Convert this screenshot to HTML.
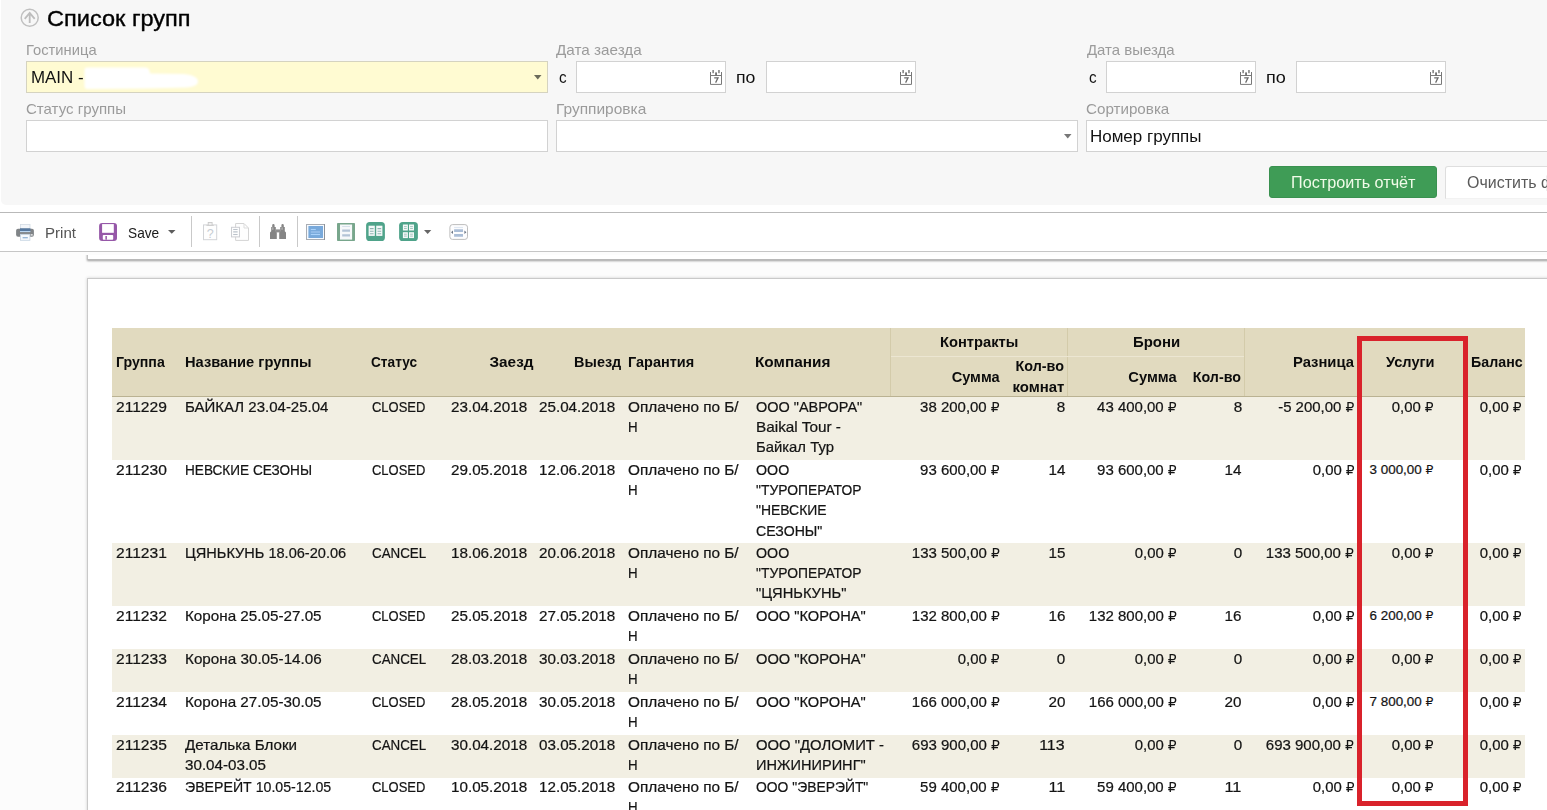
<!DOCTYPE html>
<html lang="ru"><head><meta charset="utf-8"><title>Список групп</title>
<style>

html,body{margin:0;padding:0;}
body{width:1547px;height:810px;overflow:hidden;background:#fff;position:relative;font-family:"Liberation Sans","DejaVu Sans",sans-serif;}
.t{position:absolute;white-space:nowrap;display:block;}
.d{-webkit-text-stroke:0.22px #141414;}
.t i.r{font-style:normal;font-family:"DejaVu Sans",sans-serif;font-size:0.93em;-webkit-text-stroke:0;}
.a{position:absolute;box-sizing:border-box;}
.inp{background:#fff;border:1px solid #d2d2d2;}
.sep{width:1px;background:#c9c9c9;top:216px;height:31px;}
svg{position:absolute;overflow:visible;}

</style></head><body>
<section id="filter" aria-label="Список групп">
<div class="a " style="left:1px;top:0px;width:1546px;height:204.5px;background:#f7f7f7;border-radius:0 0 0 5px;"></div>
<svg style="left:20px;top:8px" width="20" height="20" viewBox="0 0 20 20"><circle cx="9.7" cy="9.7" r="8.5" fill="none" stroke="#c0c0c0" stroke-width="1.5"/><path d="M9.7 15.1V5.6M4.7 10.9L9.7 4.9L14.7 10.9" fill="none" stroke="#bdbdbd" stroke-width="1.8"/></svg>
<div class="a inp" style="left:26px;top:61px;width:522px;height:32px;background:#fffbd2;border-color:#d5d3c0;"></div>
<div class="a inp" style="left:576px;top:61px;width:150px;height:32px;"></div>
<div class="a inp" style="left:766px;top:61px;width:150px;height:32px;"></div>
<div class="a inp" style="left:1106px;top:61px;width:150px;height:32px;"></div>
<div class="a inp" style="left:1296px;top:61px;width:150px;height:32px;"></div>
<div class="a inp" style="left:26px;top:120px;width:522px;height:32px;"></div>
<div class="a inp" style="left:556px;top:120px;width:522px;height:32px;"></div>
<div class="a inp" style="left:1086px;top:120px;width:522px;height:32px;"></div>
<svg style="left:84px;top:66px;filter:blur(0.9px)" width="116" height="26" viewBox="0 0 116 26"><path d="M0.5 4 Q0.5 1.6 3 1.6 L61 1.4 Q65 1.4 65.5 5 L66 7.6 L100 8 Q114 9.5 114 15.5 Q114 20.5 103 21.6 L60 22.6 L3 23 Q0.5 23 0.5 20 Z" fill="#fff"/></svg>
<svg style="left:534.25px;top:75.100px" width="7.5" height="4.6" viewBox="0 0 7.5 4.6"><path d="M0 0H7.5L3.75 4.6Z" fill="#6b6b5a"/></svg>
<svg style="left:1064.25px;top:134.1px" width="7.5" height="4.6" viewBox="0 0 7.5 4.6"><path d="M0 0H7.5L3.75 4.6Z" fill="#777"/></svg>
<svg style="left:710px;top:70px" width="12" height="15" viewBox="0 0 12 15"><path d="M0.5 2V14.4H11.5V2" fill="none" stroke="#787878" stroke-width="1"/><rect x="0.5" y="5" width="11" height="1" fill="#7a7a7a"/><rect x="2.3" y="0" width="1.7" height="3.2" fill="#8c8c8c"/><rect x="8.1" y="0" width="1.7" height="3.2" fill="#8c8c8c"/><rect x="5.2" y="2.4" width="1.7" height="3" fill="#666"/><path d="M4.2 7.9H8L5.6 12.6" fill="none" stroke="#6a6a6a" stroke-width="1.25"/></svg>
<svg style="left:900px;top:70px" width="12" height="15" viewBox="0 0 12 15"><path d="M0.5 2V14.4H11.5V2" fill="none" stroke="#787878" stroke-width="1"/><rect x="0.5" y="5" width="11" height="1" fill="#7a7a7a"/><rect x="2.3" y="0" width="1.7" height="3.2" fill="#8c8c8c"/><rect x="8.1" y="0" width="1.7" height="3.2" fill="#8c8c8c"/><rect x="5.2" y="2.4" width="1.7" height="3" fill="#666"/><path d="M4.2 7.9H8L5.6 12.6" fill="none" stroke="#6a6a6a" stroke-width="1.25"/></svg>
<svg style="left:1240px;top:70px" width="12" height="15" viewBox="0 0 12 15"><path d="M0.5 2V14.4H11.5V2" fill="none" stroke="#787878" stroke-width="1"/><rect x="0.5" y="5" width="11" height="1" fill="#7a7a7a"/><rect x="2.3" y="0" width="1.7" height="3.2" fill="#8c8c8c"/><rect x="8.1" y="0" width="1.7" height="3.2" fill="#8c8c8c"/><rect x="5.2" y="2.4" width="1.7" height="3" fill="#666"/><path d="M4.2 7.9H8L5.6 12.6" fill="none" stroke="#6a6a6a" stroke-width="1.25"/></svg>
<svg style="left:1430px;top:70px" width="12" height="15" viewBox="0 0 12 15"><path d="M0.5 2V14.4H11.5V2" fill="none" stroke="#787878" stroke-width="1"/><rect x="0.5" y="5" width="11" height="1" fill="#7a7a7a"/><rect x="2.3" y="0" width="1.7" height="3.2" fill="#8c8c8c"/><rect x="8.1" y="0" width="1.7" height="3.2" fill="#8c8c8c"/><rect x="5.2" y="2.4" width="1.7" height="3" fill="#666"/><path d="M4.2 7.9H8L5.6 12.6" fill="none" stroke="#6a6a6a" stroke-width="1.25"/></svg>
<div class="a " style="left:1269px;top:166px;width:168px;height:32px;background:#3f9c56;border:1px solid #3a9150;border-radius:3px;"></div>
<div class="a " style="left:1445px;top:166px;width:155px;height:33px;background:#fff;border:1px solid #dedede;border-bottom-color:#f2f2f2;border-radius:3px 0 0 0;"></div>

<span class="t" style="top:8.35px;font-size:21.2px;line-height:21.2px;left:47.30px;transform-origin:0 0;transform:scaleX(1.1114);"><b style="font-weight:400;-webkit-text-stroke:0.35px #000">Список групп</b></span>
<span class="t" style="top:42.53px;font-size:14.5px;line-height:14.5px;color:#9b9b9b;left:25.90px;transform-origin:0 0;transform:scaleX(1.0170);">Гостиница</span>
<span class="t" style="top:42.53px;font-size:14.5px;line-height:14.5px;color:#9b9b9b;left:556.20px;transform-origin:0 0;transform:scaleX(1.0521);">Дата заезда</span>
<span class="t" style="top:42.53px;font-size:14.5px;line-height:14.5px;color:#9b9b9b;left:1086.70px;transform-origin:0 0;transform:scaleX(1.0309);">Дата выезда</span>
<span class="t" style="top:101.53px;font-size:14.5px;line-height:14.5px;color:#9b9b9b;left:25.50px;transform-origin:0 0;transform:scaleX(1.0369);">Статус группы</span>
<span class="t" style="top:101.53px;font-size:14.5px;line-height:14.5px;color:#9b9b9b;left:555.80px;transform-origin:0 0;transform:scaleX(1.0678);">Группировка</span>
<span class="t" style="top:101.53px;font-size:14.5px;line-height:14.5px;color:#9b9b9b;left:1085.70px;transform-origin:0 0;transform:scaleX(1.0466);">Сортировка</span>
<span class="t" style="top:70.46px;font-size:16px;line-height:16px;color:#111;left:30.90px;transform-origin:0 0;transform:scaleX(1.0566);">MAIN -</span>
<span class="t" style="top:69.96px;font-size:16px;line-height:16px;color:#111;left:558.60px;transform-origin:0 0;transform:scaleX(0.9500);">с</span>
<span class="t" style="top:69.96px;font-size:16px;line-height:16px;color:#111;left:736.20px;transform-origin:0 0;transform:scaleX(1.1046);">по</span>
<span class="t" style="top:69.96px;font-size:16px;line-height:16px;color:#111;left:1089.00px;transform-origin:0 0;transform:scaleX(0.9500);">с</span>
<span class="t" style="top:69.96px;font-size:16px;line-height:16px;color:#111;left:1265.80px;transform-origin:0 0;transform:scaleX(1.1274);">по</span>
<span class="t" style="top:129.36px;font-size:16px;line-height:16px;color:#111;left:1090.30px;transform-origin:0 0;transform:scaleX(1.0611);">Номер группы</span>
<span class="t" style="top:174.26px;font-size:17.3px;line-height:17.3px;color:#f0fbe8;left:1290.90px;transform-origin:0 0;transform:scaleX(0.9371);">Построить отчёт</span>
<span class="t" style="top:174.26px;font-size:17.3px;line-height:17.3px;color:#5a5a5a;left:1466.70px;transform-origin:0 0;transform:scaleX(0.9241);">Очистить ф</span>
</section>
<div id="toolbar" role="toolbar">

<div class="a " style="left:0px;top:212px;width:1547px;height:40px;background:#fff;border-top:1px solid #b9b9b9;border-bottom:1px solid #c6c6c6;"></div>
<div class="a " style="left:0px;top:252px;width:1547px;height:558px;background:#fcfcfc;"></div>
<div class="a sep" style="left:191px"></div>
<div class="a sep" style="left:259px"></div>
<div class="a sep" style="left:297px"></div>
<svg style="left:16px;top:223.5px" width="18" height="17" viewBox="0 0 18 17"><rect x="4.4" y="0.5" width="9.6" height="5" fill="#f3f6fa" stroke="#d3dbe4" stroke-width="0.8"/><rect x="0.1" y="4.8" width="17.8" height="7.9" rx="1.9" fill="#808487"/><rect x="4" y="4.3" width="10.4" height="2.7" fill="#56789f"/><rect x="4" y="7" width="10.4" height="1.1" fill="#b9d5f1"/><rect x="4.4" y="10.3" width="9.5" height="6" fill="#f5f9fd" stroke="#c5d3e2" stroke-width="0.8"/><rect x="6.6" y="13.2" width="5.2" height="1.1" fill="#7fa6cf"/><rect x="14.8" y="10.3" width="1.9" height="1.2" fill="#fff"/></svg>
<svg style="left:99px;top:223px" width="18" height="18" viewBox="0 0 18 18"><rect x="0.1" y="0.1" width="17.9" height="17.8" rx="3" fill="#9658a8"/><rect x="3.1" y="1.1" width="11.7" height="8.7" fill="#fff"/><rect x="3.8" y="11.9" width="10.4" height="4.8" rx="0.8" fill="#fff"/><rect x="6.4" y="13" width="1.5" height="3.7" fill="#9658a8"/></svg>
<svg style="left:167.95px;top:229.799px" width="7.5" height="3.8" viewBox="0 0 7.5 3.8"><path d="M0 0H7.5L3.75 3.8Z" fill="#5c5c5c"/></svg>
<svg style="left:203px;top:222px" width="14" height="18" viewBox="0 0 14 18"><rect x="0.5" y="2.9" width="13.2" height="14.8" fill="#fefefe" stroke="#d2d4d7"/><rect x="5.2" y="0.5" width="3.9" height="2.9" fill="#f1f1f1" stroke="#c9c9c9" stroke-width="0.9"/><rect x="3.4" y="2.9" width="7.4" height="1" fill="#cfcfcf"/><text x="7.2" y="15.6" font-size="12.5" text-anchor="middle" fill="#c6ccd3" font-family="Liberation Sans,sans-serif">?</text></svg>
<svg style="left:231px;top:223px" width="18" height="18" viewBox="0 0 18 18"><path d="M4.6 0.5H13L17.5 5V17.4H4.6Z" fill="#fefefe" stroke="#d4d4d4"/><path d="M13 0.8V5H17.2" fill="none" stroke="#dcdcdc"/><rect x="0.5" y="4.3" width="8" height="9.6" fill="#fdfdfd" stroke="#ccced2"/><path d="M2.2 6.5H6.6M2.2 8.9H6.6M2.2 11.5H6.6" stroke="#bcc3cb" stroke-width="1.1"/></svg>
<svg style="left:270px;top:224px" width="16" height="15" viewBox="0 0 16 15"><path d="M2.2 3V1.2Q2.2 0 3.4 0Q4.6 0 4.6 1.2V3H5.8V7.2L6.8 8.4V15H0V8.4L1.2 7.2V3Z" fill="#858585"/><path d="M11.4 3V1.2Q11.4 0 12.6 0Q13.8 0 13.8 1.2V3H14.8V7.2L16 8.4V15H9.2V8.4L10.2 7.2V3Z" fill="#858585"/><rect x="5.6" y="5.4" width="4.8" height="3" fill="#8f8f8f"/><rect x="2.4" y="3.4" width="0.9" height="2.4" fill="#c9c9c9"/><rect x="11.6" y="3.4" width="0.9" height="2.4" fill="#c9c9c9"/></svg>
<svg style="left:306px;top:224px" width="19" height="16" viewBox="0 0 19 16"><rect x="0.5" y="0.5" width="18" height="15" fill="#f4f9ff" stroke="#a9adb3"/><rect x="18" y="0" width="1" height="16" fill="#8d9299"/><rect x="2.4" y="2" width="14.6" height="12" fill="#78a9db"/><path d="M4.8 5.5H9.8" stroke="#a9d2fb" stroke-width="1.1"/><path d="M4.8 8H14" stroke="#9cc3ee" stroke-width="1.4"/><path d="M4.8 10.5H14" stroke="#a9d2fb" stroke-width="1.1"/></svg>
<svg style="left:337px;top:223px" width="18" height="18" viewBox="0 0 18 18"><rect x="0" y="0" width="18" height="18" rx="0.8" fill="#78a68c"/><rect x="3" y="1.5" width="12.1" height="15.1" fill="#f6f8fa"/><path d="M5.2 3.5H13" stroke="#d3dde8" stroke-width="0.9"/><path d="M5.2 7.7H13M5.2 12.4H13" stroke="#b3c3d6" stroke-width="2.2"/></svg>
<svg style="left:366px;top:222px" width="19" height="19" viewBox="0 0 19 19"><rect x="0.1" y="0" width="18.8" height="19" rx="3.6" fill="#4fa38a"/><rect x="2.6" y="3.7" width="6.2" height="10.2" fill="#f4f8f8"/><rect x="10.2" y="3.7" width="6.2" height="10.2" fill="#f4f8f8"/><path d="M3.9 6.6H7.6M3.9 9.3H7.6M3.9 11.7H7.6M11.5 6.6H15.2M11.5 9.3H15.2M11.5 11.7H15.2" stroke="#8fb3b0" stroke-width="1.1"/></svg>
<svg style="left:399px;top:222px" width="19" height="19" viewBox="0 0 19 19"><rect x="0.1" y="0" width="18.8" height="19" rx="3.6" fill="#4fa38a"/><rect x="3.9" y="2.5" width="5" height="6" fill="#f4f8f8"/><rect x="10" y="2.5" width="5" height="6" fill="#f4f8f8"/><rect x="3.9" y="10.2" width="5" height="5.9" fill="#f4f8f8"/><rect x="10" y="10.2" width="5" height="5.9" fill="#f4f8f8"/><path d="M5 4.6H7.8M5 6.5H7.8M11.1 4.6H13.9M11.1 6.5H13.9M5 12.2H7.8M5 14.1H7.8M11.1 12.2H13.9M11.1 14.1H13.9" stroke="#9cc0b8" stroke-width="0.9"/></svg>
<svg style="left:424.150px;top:229.9px" width="7.3" height="4" viewBox="0 0 7.3 4"><path d="M0 0H7.3L3.65 4Z" fill="#666"/></svg>
<svg style="left:449px;top:224px" width="19" height="16" viewBox="0 0 19 16"><rect x="0.9" y="0.6" width="17.6" height="14.8" rx="2.6" fill="#fdfdfe" stroke="#bdbdbd"/><path d="M5.1 3.5H14" stroke="#dfe7f1" stroke-width="1.2"/><path d="M5.1 6.65H14M5.1 11.3H14" stroke="#aabdd6" stroke-width="2.7"/><path d="M2 8.3L4 6.6V10Z M17.4 8.3L15.4 6.6V10Z" fill="#6b7685"/></svg>

<span class="t" style="top:226.33px;font-size:14.5px;line-height:14.5px;color:#555;left:45.20px;transform-origin:0 0;transform:scaleX(1.0393);">Print</span>
<span class="t" style="top:226.33px;font-size:14.5px;line-height:14.5px;color:#1a1a1a;left:127.70px;transform-origin:0 0;transform:scaleX(0.9437);">Save</span>
</div>
<main id="report" role="table">

<div class="a " style="left:87px;top:240px;width:1513px;height:20px;background:#fff;border:1px solid #c2c2c2;border-bottom-color:#b9b9b9;box-shadow:0 1px 2px rgba(0,0,0,.38);clip-path:inset(15px -10px -10px -10px);"></div>
<div class="a " style="left:87px;top:278px;width:1513px;height:622px;background:#fff;border:1px solid #c9c9c9;box-shadow:0 0 3px rgba(0,0,0,.18);"></div>
<div class="a " style="left:112px;top:328px;width:1413px;height:69px;background:#e1dabf;border-bottom:1px solid #bab292;"></div>
<div class="a " style="left:112px;top:397px;width:1413px;height:63px;background:#f2efe3;"></div>
<div class="a " style="left:112px;top:543px;width:1413px;height:63px;background:#f2efe3;"></div>
<div class="a " style="left:112px;top:649px;width:1413px;height:43px;background:#f2efe3;"></div>
<div class="a " style="left:112px;top:735px;width:1413px;height:43px;background:#f2efe3;"></div>
<div class="a " style="left:890px;top:328px;width:1px;height:68px;background:#d3cbaa;"></div>
<div class="a " style="left:1067px;top:328px;width:1px;height:68px;background:#d3cbaa;"></div>
<div class="a " style="left:1244px;top:328px;width:1px;height:68px;background:#d3cbaa;"></div>
<div class="a " style="left:891px;top:356px;width:353px;height:1px;background:#ece6d2;"></div>
<div class="thead" role="row">
<span class="t" style="top:354.74px;font-size:14.8px;line-height:14.8px;font-weight:700;color:#0c0c0c;left:115.80px;transform-origin:0 0;transform:scaleX(0.9566);">Группа</span>
<span class="t" style="top:354.74px;font-size:14.8px;line-height:14.8px;font-weight:700;color:#0c0c0c;left:184.50px;transform-origin:0 0;transform:scaleX(0.9914);">Название группы</span>
<span class="t" style="top:354.74px;font-size:14.8px;line-height:14.8px;font-weight:700;color:#0c0c0c;left:371.20px;transform-origin:0 0;transform:scaleX(0.9223);">Статус</span>
<span class="t" style="top:354.74px;font-size:14.8px;line-height:14.8px;font-weight:700;color:#0c0c0c;right:1013.80px;transform-origin:100% 0;transform:scaleX(1.0357);">Заезд</span>
<span class="t" style="top:354.74px;font-size:14.8px;line-height:14.8px;font-weight:700;color:#0c0c0c;right:925.40px;transform-origin:100% 0;transform:scaleX(0.9770);">Выезд</span>
<span class="t" style="top:354.74px;font-size:14.8px;line-height:14.8px;font-weight:700;color:#0c0c0c;left:627.60px;transform-origin:0 0;transform:scaleX(0.9792);">Гарантия</span>
<span class="t" style="top:354.74px;font-size:14.8px;line-height:14.8px;font-weight:700;color:#0c0c0c;left:755.40px;transform-origin:0 0;transform:scaleX(1.0378);">Компания</span>
<span class="t" style="top:334.74px;font-size:14.8px;line-height:14.8px;font-weight:700;color:#0c0c0c;left:940.20px;transform-origin:0 0;transform:scaleX(0.9948);">Контракты</span>
<span class="t" style="top:334.74px;font-size:14.8px;line-height:14.8px;font-weight:700;color:#0c0c0c;left:1133.20px;transform-origin:0 0;transform:scaleX(1.0096);">Брони</span>
<span class="t" style="top:369.74px;font-size:14.8px;line-height:14.8px;font-weight:700;color:#0c0c0c;right:547.40px;transform-origin:100% 0;transform:scaleX(0.9865);">Сумма</span>
<span class="t" style="top:358.74px;font-size:14.8px;line-height:14.8px;font-weight:700;color:#0c0c0c;right:483.00px;transform-origin:100% 0;transform:scaleX(0.9706);">Кол-во</span>
<span class="t" style="top:379.74px;font-size:14.8px;line-height:14.8px;font-weight:700;color:#0c0c0c;right:482.70px;transform-origin:100% 0;transform:scaleX(1.0112);">комнат</span>
<span class="t" style="top:369.74px;font-size:14.8px;line-height:14.8px;font-weight:700;color:#0c0c0c;right:370.10px;transform-origin:100% 0;transform:scaleX(0.9947);">Сумма</span>
<span class="t" style="top:369.74px;font-size:14.8px;line-height:14.8px;font-weight:700;color:#0c0c0c;right:306.10px;transform-origin:100% 0;transform:scaleX(0.9646);">Кол-во</span>
<span class="t" style="top:354.74px;font-size:14.8px;line-height:14.8px;font-weight:700;color:#0c0c0c;right:192.80px;transform-origin:100% 0;transform:scaleX(1.0003);">Разница</span>
<span class="t" style="top:354.74px;font-size:14.8px;line-height:14.8px;font-weight:700;color:#0c0c0c;left:1385.60px;transform-origin:0 0;transform:scaleX(0.9877);">Услуги</span>
<span class="t" style="top:354.74px;font-size:14.8px;line-height:14.8px;font-weight:700;color:#0c0c0c;right:24.80px;transform-origin:100% 0;transform:scaleX(0.9614);">Баланс</span>
</div>
<div class="row" role="row">
<span class="t d" style="top:399.97px;font-size:14.8px;line-height:14.8px;color:#141414;left:116.00px;transform-origin:0 0;transform:scaleX(1.0526);">211229</span>
<span class="t d" style="top:399.97px;font-size:14.8px;line-height:14.8px;color:#141414;left:184.80px;transform-origin:0 0;transform:scaleX(1.0133);">БАЙКАЛ 23.04-25.04</span>
<span class="t d" style="top:399.97px;font-size:14.8px;line-height:14.8px;color:#141414;left:371.70px;transform-origin:0 0;transform:scaleX(0.8758);">CLOSED</span>
<span class="t d" style="top:399.97px;font-size:14.8px;line-height:14.8px;color:#141414;left:450.90px;transform-origin:0 0;transform:scaleX(1.0283);">23.04.2018</span>
<span class="t d" style="top:399.97px;font-size:14.8px;line-height:14.8px;color:#141414;left:539.40px;transform-origin:0 0;transform:scaleX(1.0283);">25.04.2018</span>
<span class="t d" style="top:399.97px;font-size:14.8px;line-height:14.8px;color:#141414;left:628.00px;transform-origin:0 0;transform:scaleX(1.0367);">Оплачено по Б/</span>
<span class="t d" style="top:420.17px;font-size:14.8px;line-height:14.8px;color:#141414;left:628.00px;transform-origin:0 0;transform:scaleX(0.8982);">Н</span>
<span class="t d" style="top:399.97px;font-size:14.8px;line-height:14.8px;color:#141414;left:755.90px;transform-origin:0 0;transform:scaleX(0.9771);">ООО "АВРОРА"</span>
<span class="t d" style="top:420.17px;font-size:14.8px;line-height:14.8px;color:#141414;left:755.90px;transform-origin:0 0;transform:scaleX(1.0358);">Baikal Tour -</span>
<span class="t d" style="top:440.37px;font-size:14.8px;line-height:14.8px;color:#141414;left:755.90px;transform-origin:0 0;transform:scaleX(1.0031);">Байкал Тур</span>
<span class="t d" style="top:399.97px;font-size:14.8px;line-height:14.8px;color:#141414;right:547.50px;transform-origin:100% 0;transform:scaleX(1.0114);">38 200,00 <i class="r">₽</i></span>
<span class="t d" style="top:399.97px;font-size:14.8px;line-height:14.8px;color:#141414;right:482.00px;transform-origin:100% 0;transform:scaleX(1.0286);">8</span>
<span class="t d" style="top:399.97px;font-size:14.8px;line-height:14.8px;color:#141414;right:370.20px;transform-origin:100% 0;transform:scaleX(1.0114);">43 400,00 <i class="r">₽</i></span>
<span class="t d" style="top:399.97px;font-size:14.8px;line-height:14.8px;color:#141414;right:305.20px;transform-origin:100% 0;transform:scaleX(1.0286);">8</span>
<span class="t d" style="top:399.97px;font-size:14.8px;line-height:14.8px;color:#141414;right:192.60px;transform-origin:100% 0;transform:scaleX(1.0111);">-5 200,00 <i class="r">₽</i></span>
<span class="t d" style="top:399.97px;font-size:14.8px;line-height:14.8px;color:#141414;right:113.70px;transform-origin:100% 0;transform:scaleX(1.0067);">0,00 <i class="r">₽</i></span>
<span class="t d" style="top:399.97px;font-size:14.8px;line-height:14.8px;color:#141414;right:25.20px;transform-origin:100% 0;transform:scaleX(1.0067);">0,00 <i class="r">₽</i></span>
</div>
<div class="row" role="row">
<span class="t d" style="top:462.97px;font-size:14.8px;line-height:14.8px;color:#141414;left:116.00px;transform-origin:0 0;transform:scaleX(1.0526);">211230</span>
<span class="t d" style="top:462.97px;font-size:14.8px;line-height:14.8px;color:#141414;left:184.80px;transform-origin:0 0;transform:scaleX(0.9192);">НЕВСКИЕ СЕЗОНЫ</span>
<span class="t d" style="top:462.97px;font-size:14.8px;line-height:14.8px;color:#141414;left:371.70px;transform-origin:0 0;transform:scaleX(0.8758);">CLOSED</span>
<span class="t d" style="top:462.97px;font-size:14.8px;line-height:14.8px;color:#141414;left:450.90px;transform-origin:0 0;transform:scaleX(1.0283);">29.05.2018</span>
<span class="t d" style="top:462.97px;font-size:14.8px;line-height:14.8px;color:#141414;left:539.40px;transform-origin:0 0;transform:scaleX(1.0283);">12.06.2018</span>
<span class="t d" style="top:462.97px;font-size:14.8px;line-height:14.8px;color:#141414;left:628.00px;transform-origin:0 0;transform:scaleX(1.0367);">Оплачено по Б/</span>
<span class="t d" style="top:483.17px;font-size:14.8px;line-height:14.8px;color:#141414;left:628.00px;transform-origin:0 0;transform:scaleX(0.8982);">Н</span>
<span class="t d" style="top:462.97px;font-size:14.8px;line-height:14.8px;color:#141414;left:755.90px;transform-origin:0 0;transform:scaleX(0.9614);">ООО</span>
<span class="t d" style="top:483.17px;font-size:14.8px;line-height:14.8px;color:#141414;left:755.90px;transform-origin:0 0;transform:scaleX(0.9369);">"ТУРОПЕРАТОР</span>
<span class="t d" style="top:503.37px;font-size:14.8px;line-height:14.8px;color:#141414;left:755.90px;transform-origin:0 0;transform:scaleX(0.9413);">"НЕВСКИЕ</span>
<span class="t d" style="top:523.57px;font-size:14.8px;line-height:14.8px;color:#141414;left:755.90px;transform-origin:0 0;transform:scaleX(0.9545);">СЕЗОНЫ"</span>
<span class="t d" style="top:462.97px;font-size:14.8px;line-height:14.8px;color:#141414;right:547.50px;transform-origin:100% 0;transform:scaleX(1.0114);">93 600,00 <i class="r">₽</i></span>
<span class="t d" style="top:462.97px;font-size:14.8px;line-height:14.8px;color:#141414;right:482.00px;transform-origin:100% 0;transform:scaleX(1.0286);">14</span>
<span class="t d" style="top:462.97px;font-size:14.8px;line-height:14.8px;color:#141414;right:370.20px;transform-origin:100% 0;transform:scaleX(1.0114);">93 600,00 <i class="r">₽</i></span>
<span class="t d" style="top:462.97px;font-size:14.8px;line-height:14.8px;color:#141414;right:305.20px;transform-origin:100% 0;transform:scaleX(1.0286);">14</span>
<span class="t d" style="top:462.97px;font-size:14.8px;line-height:14.8px;color:#141414;right:192.60px;transform-origin:100% 0;transform:scaleX(1.0067);">0,00 <i class="r">₽</i></span>
<span class="t d" style="top:462.96px;font-size:13.4px;line-height:13.4px;color:#141414;right:113.60px;transform-origin:100% 0;">3 000,00 <i class="r">₽</i></span>
<span class="t d" style="top:462.97px;font-size:14.8px;line-height:14.8px;color:#141414;right:25.20px;transform-origin:100% 0;transform:scaleX(1.0067);">0,00 <i class="r">₽</i></span>
</div>
<div class="row" role="row">
<span class="t d" style="top:545.97px;font-size:14.8px;line-height:14.8px;color:#141414;left:116.00px;transform-origin:0 0;transform:scaleX(1.0526);">211231</span>
<span class="t d" style="top:545.97px;font-size:14.8px;line-height:14.8px;color:#141414;left:184.80px;transform-origin:0 0;transform:scaleX(0.9846);">ЦЯНЬКУНЬ 18.06-20.06</span>
<span class="t d" style="top:545.97px;font-size:14.8px;line-height:14.8px;color:#141414;left:371.70px;transform-origin:0 0;transform:scaleX(0.9029);">CANCEL</span>
<span class="t d" style="top:545.97px;font-size:14.8px;line-height:14.8px;color:#141414;left:450.90px;transform-origin:0 0;transform:scaleX(1.0283);">18.06.2018</span>
<span class="t d" style="top:545.97px;font-size:14.8px;line-height:14.8px;color:#141414;left:539.40px;transform-origin:0 0;transform:scaleX(1.0283);">20.06.2018</span>
<span class="t d" style="top:545.97px;font-size:14.8px;line-height:14.8px;color:#141414;left:628.00px;transform-origin:0 0;transform:scaleX(1.0367);">Оплачено по Б/</span>
<span class="t d" style="top:566.17px;font-size:14.8px;line-height:14.8px;color:#141414;left:628.00px;transform-origin:0 0;transform:scaleX(0.8982);">Н</span>
<span class="t d" style="top:545.97px;font-size:14.8px;line-height:14.8px;color:#141414;left:755.90px;transform-origin:0 0;transform:scaleX(0.9614);">ООО</span>
<span class="t d" style="top:566.17px;font-size:14.8px;line-height:14.8px;color:#141414;left:755.90px;transform-origin:0 0;transform:scaleX(0.9369);">"ТУРОПЕРАТОР</span>
<span class="t d" style="top:586.37px;font-size:14.8px;line-height:14.8px;color:#141414;left:755.90px;transform-origin:0 0;transform:scaleX(0.9920);">"ЦЯНЬКУНЬ"</span>
<span class="t d" style="top:545.97px;font-size:14.8px;line-height:14.8px;color:#141414;right:547.50px;transform-origin:100% 0;transform:scaleX(1.0132);">133 500,00 <i class="r">₽</i></span>
<span class="t d" style="top:545.97px;font-size:14.8px;line-height:14.8px;color:#141414;right:482.00px;transform-origin:100% 0;transform:scaleX(1.0286);">15</span>
<span class="t d" style="top:545.97px;font-size:14.8px;line-height:14.8px;color:#141414;right:370.20px;transform-origin:100% 0;transform:scaleX(1.0067);">0,00 <i class="r">₽</i></span>
<span class="t d" style="top:545.97px;font-size:14.8px;line-height:14.8px;color:#141414;right:305.20px;transform-origin:100% 0;transform:scaleX(1.0286);">0</span>
<span class="t d" style="top:545.97px;font-size:14.8px;line-height:14.8px;color:#141414;right:192.60px;transform-origin:100% 0;transform:scaleX(1.0132);">133 500,00 <i class="r">₽</i></span>
<span class="t d" style="top:545.97px;font-size:14.8px;line-height:14.8px;color:#141414;right:113.70px;transform-origin:100% 0;transform:scaleX(1.0067);">0,00 <i class="r">₽</i></span>
<span class="t d" style="top:545.97px;font-size:14.8px;line-height:14.8px;color:#141414;right:25.20px;transform-origin:100% 0;transform:scaleX(1.0067);">0,00 <i class="r">₽</i></span>
</div>
<div class="row" role="row">
<span class="t d" style="top:608.97px;font-size:14.8px;line-height:14.8px;color:#141414;left:116.00px;transform-origin:0 0;transform:scaleX(1.0526);">211232</span>
<span class="t d" style="top:608.97px;font-size:14.8px;line-height:14.8px;color:#141414;left:184.80px;transform-origin:0 0;transform:scaleX(1.0285);">Корона 25.05-27.05</span>
<span class="t d" style="top:608.97px;font-size:14.8px;line-height:14.8px;color:#141414;left:371.70px;transform-origin:0 0;transform:scaleX(0.8758);">CLOSED</span>
<span class="t d" style="top:608.97px;font-size:14.8px;line-height:14.8px;color:#141414;left:450.90px;transform-origin:0 0;transform:scaleX(1.0283);">25.05.2018</span>
<span class="t d" style="top:608.97px;font-size:14.8px;line-height:14.8px;color:#141414;left:539.40px;transform-origin:0 0;transform:scaleX(1.0283);">27.05.2018</span>
<span class="t d" style="top:608.97px;font-size:14.8px;line-height:14.8px;color:#141414;left:628.00px;transform-origin:0 0;transform:scaleX(1.0367);">Оплачено по Б/</span>
<span class="t d" style="top:629.17px;font-size:14.8px;line-height:14.8px;color:#141414;left:628.00px;transform-origin:0 0;transform:scaleX(0.8982);">Н</span>
<span class="t d" style="top:608.97px;font-size:14.8px;line-height:14.8px;color:#141414;left:755.90px;transform-origin:0 0;transform:scaleX(0.9908);">ООО "КОРОНА"</span>
<span class="t d" style="top:608.97px;font-size:14.8px;line-height:14.8px;color:#141414;right:547.50px;transform-origin:100% 0;transform:scaleX(1.0132);">132 800,00 <i class="r">₽</i></span>
<span class="t d" style="top:608.97px;font-size:14.8px;line-height:14.8px;color:#141414;right:482.00px;transform-origin:100% 0;transform:scaleX(1.0286);">16</span>
<span class="t d" style="top:608.97px;font-size:14.8px;line-height:14.8px;color:#141414;right:370.20px;transform-origin:100% 0;transform:scaleX(1.0132);">132 800,00 <i class="r">₽</i></span>
<span class="t d" style="top:608.97px;font-size:14.8px;line-height:14.8px;color:#141414;right:305.20px;transform-origin:100% 0;transform:scaleX(1.0286);">16</span>
<span class="t d" style="top:608.97px;font-size:14.8px;line-height:14.8px;color:#141414;right:192.60px;transform-origin:100% 0;transform:scaleX(1.0067);">0,00 <i class="r">₽</i></span>
<span class="t d" style="top:608.96px;font-size:13.4px;line-height:13.4px;color:#141414;right:113.60px;transform-origin:100% 0;">6 200,00 <i class="r">₽</i></span>
<span class="t d" style="top:608.97px;font-size:14.8px;line-height:14.8px;color:#141414;right:25.20px;transform-origin:100% 0;transform:scaleX(1.0067);">0,00 <i class="r">₽</i></span>
</div>
<div class="row" role="row">
<span class="t d" style="top:651.97px;font-size:14.8px;line-height:14.8px;color:#141414;left:116.00px;transform-origin:0 0;transform:scaleX(1.0526);">211233</span>
<span class="t d" style="top:651.97px;font-size:14.8px;line-height:14.8px;color:#141414;left:184.80px;transform-origin:0 0;transform:scaleX(1.0300);">Корона 30.05-14.06</span>
<span class="t d" style="top:651.97px;font-size:14.8px;line-height:14.8px;color:#141414;left:371.70px;transform-origin:0 0;transform:scaleX(0.9029);">CANCEL</span>
<span class="t d" style="top:651.97px;font-size:14.8px;line-height:14.8px;color:#141414;left:450.90px;transform-origin:0 0;transform:scaleX(1.0283);">28.03.2018</span>
<span class="t d" style="top:651.97px;font-size:14.8px;line-height:14.8px;color:#141414;left:539.40px;transform-origin:0 0;transform:scaleX(1.0283);">30.03.2018</span>
<span class="t d" style="top:651.97px;font-size:14.8px;line-height:14.8px;color:#141414;left:628.00px;transform-origin:0 0;transform:scaleX(1.0367);">Оплачено по Б/</span>
<span class="t d" style="top:672.17px;font-size:14.8px;line-height:14.8px;color:#141414;left:628.00px;transform-origin:0 0;transform:scaleX(0.8982);">Н</span>
<span class="t d" style="top:651.97px;font-size:14.8px;line-height:14.8px;color:#141414;left:755.90px;transform-origin:0 0;transform:scaleX(0.9908);">ООО "КОРОНА"</span>
<span class="t d" style="top:651.97px;font-size:14.8px;line-height:14.8px;color:#141414;right:547.50px;transform-origin:100% 0;transform:scaleX(1.0067);">0,00 <i class="r">₽</i></span>
<span class="t d" style="top:651.97px;font-size:14.8px;line-height:14.8px;color:#141414;right:482.00px;transform-origin:100% 0;transform:scaleX(1.0286);">0</span>
<span class="t d" style="top:651.97px;font-size:14.8px;line-height:14.8px;color:#141414;right:370.20px;transform-origin:100% 0;transform:scaleX(1.0067);">0,00 <i class="r">₽</i></span>
<span class="t d" style="top:651.97px;font-size:14.8px;line-height:14.8px;color:#141414;right:305.20px;transform-origin:100% 0;transform:scaleX(1.0286);">0</span>
<span class="t d" style="top:651.97px;font-size:14.8px;line-height:14.8px;color:#141414;right:192.60px;transform-origin:100% 0;transform:scaleX(1.0067);">0,00 <i class="r">₽</i></span>
<span class="t d" style="top:651.97px;font-size:14.8px;line-height:14.8px;color:#141414;right:113.70px;transform-origin:100% 0;transform:scaleX(1.0067);">0,00 <i class="r">₽</i></span>
<span class="t d" style="top:651.97px;font-size:14.8px;line-height:14.8px;color:#141414;right:25.20px;transform-origin:100% 0;transform:scaleX(1.0067);">0,00 <i class="r">₽</i></span>
</div>
<div class="row" role="row">
<span class="t d" style="top:694.97px;font-size:14.8px;line-height:14.8px;color:#141414;left:116.00px;transform-origin:0 0;transform:scaleX(1.0526);">211234</span>
<span class="t d" style="top:694.97px;font-size:14.8px;line-height:14.8px;color:#141414;left:184.80px;transform-origin:0 0;transform:scaleX(1.0285);">Корона 27.05-30.05</span>
<span class="t d" style="top:694.97px;font-size:14.8px;line-height:14.8px;color:#141414;left:371.70px;transform-origin:0 0;transform:scaleX(0.8758);">CLOSED</span>
<span class="t d" style="top:694.97px;font-size:14.8px;line-height:14.8px;color:#141414;left:450.90px;transform-origin:0 0;transform:scaleX(1.0283);">28.05.2018</span>
<span class="t d" style="top:694.97px;font-size:14.8px;line-height:14.8px;color:#141414;left:539.40px;transform-origin:0 0;transform:scaleX(1.0283);">30.05.2018</span>
<span class="t d" style="top:694.97px;font-size:14.8px;line-height:14.8px;color:#141414;left:628.00px;transform-origin:0 0;transform:scaleX(1.0367);">Оплачено по Б/</span>
<span class="t d" style="top:715.17px;font-size:14.8px;line-height:14.8px;color:#141414;left:628.00px;transform-origin:0 0;transform:scaleX(0.8982);">Н</span>
<span class="t d" style="top:694.97px;font-size:14.8px;line-height:14.8px;color:#141414;left:755.90px;transform-origin:0 0;transform:scaleX(0.9908);">ООО "КОРОНА"</span>
<span class="t d" style="top:694.97px;font-size:14.8px;line-height:14.8px;color:#141414;right:547.50px;transform-origin:100% 0;transform:scaleX(1.0132);">166 000,00 <i class="r">₽</i></span>
<span class="t d" style="top:694.97px;font-size:14.8px;line-height:14.8px;color:#141414;right:482.00px;transform-origin:100% 0;transform:scaleX(1.0286);">20</span>
<span class="t d" style="top:694.97px;font-size:14.8px;line-height:14.8px;color:#141414;right:370.20px;transform-origin:100% 0;transform:scaleX(1.0132);">166 000,00 <i class="r">₽</i></span>
<span class="t d" style="top:694.97px;font-size:14.8px;line-height:14.8px;color:#141414;right:305.20px;transform-origin:100% 0;transform:scaleX(1.0286);">20</span>
<span class="t d" style="top:694.97px;font-size:14.8px;line-height:14.8px;color:#141414;right:192.60px;transform-origin:100% 0;transform:scaleX(1.0067);">0,00 <i class="r">₽</i></span>
<span class="t d" style="top:694.96px;font-size:13.4px;line-height:13.4px;color:#141414;right:113.60px;transform-origin:100% 0;">7 800,00 <i class="r">₽</i></span>
<span class="t d" style="top:694.97px;font-size:14.8px;line-height:14.8px;color:#141414;right:25.20px;transform-origin:100% 0;transform:scaleX(1.0067);">0,00 <i class="r">₽</i></span>
</div>
<div class="row" role="row">
<span class="t d" style="top:737.97px;font-size:14.8px;line-height:14.8px;color:#141414;left:116.00px;transform-origin:0 0;transform:scaleX(1.0526);">211235</span>
<span class="t d" style="top:737.97px;font-size:14.8px;line-height:14.8px;color:#141414;left:184.80px;transform-origin:0 0;transform:scaleX(1.0246);">Деталька Блоки</span>
<span class="t d" style="top:758.17px;font-size:14.8px;line-height:14.8px;color:#141414;left:184.80px;transform-origin:0 0;transform:scaleX(1.0255);">30.04-03.05</span>
<span class="t d" style="top:737.97px;font-size:14.8px;line-height:14.8px;color:#141414;left:371.70px;transform-origin:0 0;transform:scaleX(0.9029);">CANCEL</span>
<span class="t d" style="top:737.97px;font-size:14.8px;line-height:14.8px;color:#141414;left:450.90px;transform-origin:0 0;transform:scaleX(1.0283);">30.04.2018</span>
<span class="t d" style="top:737.97px;font-size:14.8px;line-height:14.8px;color:#141414;left:539.40px;transform-origin:0 0;transform:scaleX(1.0283);">03.05.2018</span>
<span class="t d" style="top:737.97px;font-size:14.8px;line-height:14.8px;color:#141414;left:628.00px;transform-origin:0 0;transform:scaleX(1.0367);">Оплачено по Б/</span>
<span class="t d" style="top:758.17px;font-size:14.8px;line-height:14.8px;color:#141414;left:628.00px;transform-origin:0 0;transform:scaleX(0.8982);">Н</span>
<span class="t d" style="top:737.97px;font-size:14.8px;line-height:14.8px;color:#141414;left:755.90px;transform-origin:0 0;transform:scaleX(1.0038);">ООО "ДОЛОМИТ -</span>
<span class="t d" style="top:758.17px;font-size:14.8px;line-height:14.8px;color:#141414;left:755.90px;transform-origin:0 0;transform:scaleX(0.9847);">ИНЖИНИРИНГ"</span>
<span class="t d" style="top:737.97px;font-size:14.8px;line-height:14.8px;color:#141414;right:547.50px;transform-origin:100% 0;transform:scaleX(1.0132);">693 900,00 <i class="r">₽</i></span>
<span class="t d" style="top:737.97px;font-size:14.8px;line-height:14.8px;color:#141414;right:482.00px;transform-origin:100% 0;transform:scaleX(1.0770);">113</span>
<span class="t d" style="top:737.97px;font-size:14.8px;line-height:14.8px;color:#141414;right:370.20px;transform-origin:100% 0;transform:scaleX(1.0067);">0,00 <i class="r">₽</i></span>
<span class="t d" style="top:737.97px;font-size:14.8px;line-height:14.8px;color:#141414;right:305.20px;transform-origin:100% 0;transform:scaleX(1.0286);">0</span>
<span class="t d" style="top:737.97px;font-size:14.8px;line-height:14.8px;color:#141414;right:192.60px;transform-origin:100% 0;transform:scaleX(1.0132);">693 900,00 <i class="r">₽</i></span>
<span class="t d" style="top:737.97px;font-size:14.8px;line-height:14.8px;color:#141414;right:113.70px;transform-origin:100% 0;transform:scaleX(1.0067);">0,00 <i class="r">₽</i></span>
<span class="t d" style="top:737.97px;font-size:14.8px;line-height:14.8px;color:#141414;right:25.20px;transform-origin:100% 0;transform:scaleX(1.0067);">0,00 <i class="r">₽</i></span>
</div>
<div class="row" role="row">
<span class="t d" style="top:779.97px;font-size:14.8px;line-height:14.8px;color:#141414;left:116.00px;transform-origin:0 0;transform:scaleX(1.0526);">211236</span>
<span class="t d" style="top:779.97px;font-size:14.8px;line-height:14.8px;color:#141414;left:184.80px;transform-origin:0 0;transform:scaleX(0.9562);">ЭВЕРЕЙТ 10.05-12.05</span>
<span class="t d" style="top:779.97px;font-size:14.8px;line-height:14.8px;color:#141414;left:371.70px;transform-origin:0 0;transform:scaleX(0.8758);">CLOSED</span>
<span class="t d" style="top:779.97px;font-size:14.8px;line-height:14.8px;color:#141414;left:450.90px;transform-origin:0 0;transform:scaleX(1.0283);">10.05.2018</span>
<span class="t d" style="top:779.97px;font-size:14.8px;line-height:14.8px;color:#141414;left:539.40px;transform-origin:0 0;transform:scaleX(1.0283);">12.05.2018</span>
<span class="t d" style="top:779.97px;font-size:14.8px;line-height:14.8px;color:#141414;left:628.00px;transform-origin:0 0;transform:scaleX(1.0367);">Оплачено по Б/</span>
<span class="t d" style="top:800.17px;font-size:14.8px;line-height:14.8px;color:#141414;left:628.00px;transform-origin:0 0;transform:scaleX(0.8982);">Н</span>
<span class="t d" style="top:779.97px;font-size:14.8px;line-height:14.8px;color:#141414;left:755.90px;transform-origin:0 0;transform:scaleX(0.9382);">ООО "ЭВЕРЭЙТ"</span>
<span class="t d" style="top:779.97px;font-size:14.8px;line-height:14.8px;color:#141414;right:547.50px;transform-origin:100% 0;transform:scaleX(1.0114);">59 400,00 <i class="r">₽</i></span>
<span class="t d" style="top:779.97px;font-size:14.8px;line-height:14.8px;color:#141414;right:482.00px;transform-origin:100% 0;transform:scaleX(1.1018);">11</span>
<span class="t d" style="top:779.97px;font-size:14.8px;line-height:14.8px;color:#141414;right:370.20px;transform-origin:100% 0;transform:scaleX(1.0114);">59 400,00 <i class="r">₽</i></span>
<span class="t d" style="top:779.97px;font-size:14.8px;line-height:14.8px;color:#141414;right:305.20px;transform-origin:100% 0;transform:scaleX(1.1018);">11</span>
<span class="t d" style="top:779.97px;font-size:14.8px;line-height:14.8px;color:#141414;right:192.60px;transform-origin:100% 0;transform:scaleX(1.0067);">0,00 <i class="r">₽</i></span>
<span class="t d" style="top:779.97px;font-size:14.8px;line-height:14.8px;color:#141414;right:113.70px;transform-origin:100% 0;transform:scaleX(1.0067);">0,00 <i class="r">₽</i></span>
<span class="t d" style="top:779.97px;font-size:14.8px;line-height:14.8px;color:#141414;right:25.20px;transform-origin:100% 0;transform:scaleX(1.0067);">0,00 <i class="r">₽</i></span>
</div>
<div class="a " style="left:1357px;top:336px;width:111px;height:470px;border:5px solid #d9222b;"></div>
</main>
</body></html>
